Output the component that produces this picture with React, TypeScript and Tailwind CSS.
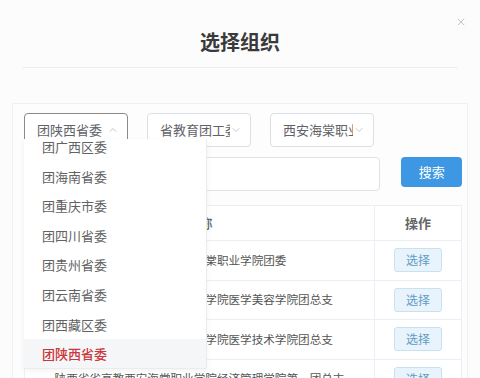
import { ChevronDown, ChevronUp, X } from 'lucide-react';

const provinces = [
  '团广西区委',
  '团海南省委',
  '团重庆市委',
  '团四川省委',
  '团贵州省委',
  '团云南省委',
  '团西藏区委',
  '团陕西省委',
];

const orgs = [
  '陕西省高教西安海棠职业学院团委',
  '陕西省省高教西安海棠职业学院医学美容学院团总支',
  '陕西省省高教西安海棠职业学院医学技术学院团总支',
  '陕西省省高教西安海棠职业学院经济管理学院第一团总支',
];

function Select({ label, open }: { label: string; open?: boolean }) {
  return (
    <div
      className={`flex h-[34px] w-[104px] items-center rounded-[4px] border bg-white pl-[12px] pr-[8px] ${
        open ? 'border-[#8a8a8a]' : 'border-[#dcdfe6]'
      }`}
    >
      <span className="flex-1 overflow-hidden whitespace-nowrap text-[13px] text-[#606266]">{label}</span>
      {open ? (
        <ChevronUp size={12} strokeWidth={1.5} className="text-[#b4b4b4]" />
      ) : (
        <ChevronDown size={12} strokeWidth={1.5} className="text-[#b4b4b4]" />
      )}
    </div>
  );
}

export default function App() {
  return (
    <div
      className="relative h-[378px] w-[480px] overflow-hidden bg-[#fcfcfc]"
      style={{ fontFamily: '"Noto Sans CJK SC", "Noto Sans", sans-serif' }}
    >
      <button className="absolute right-[13px] top-[16px] text-[#aaaaaa]">
        <X size={12} strokeWidth={1.4} />
      </button>
      <h1 className="pt-[28px] text-center text-[20px] font-bold leading-[28px] text-[#3a3a3a]">选择组织</h1>
      <div className="mx-[22px] mt-[11px] border-b border-[#efefef]" />

      <div className="mx-[12px] mt-[35px] border-x border-t border-[#f0f0f0] bg-[#fdfdfd] pb-4 pl-[11px] pr-[5px] pt-[9px]">
        {/* filters */}
        <div className="flex gap-[19px]">
          <div className="relative">
            <Select label="团陕西省委" open />
            <div className="absolute left-0 top-[26px] z-10 h-[230px] w-[183px] overflow-hidden border-b border-r border-[#ebebeb] bg-white shadow-[0_2px_6px_rgba(0,0,0,0.05)]">
              <ul className="mt-[-7px]">
                {provinces.map((p, i) => (
                  <li
                    key={p}
                    className={`flex h-[29.6px] items-center pl-[18px] text-[13px] ${
                      i === provinces.length - 1
                        ? 'bg-[#f5f6f8] font-medium text-[#c8383c]'
                        : 'text-[#626262]'
                    }`}
                  >
                    {p}
                  </li>
                ))}
              </ul>
            </div>
          </div>
          <Select label="省教育团工委" />
          <Select label="西安海棠职业学院" />
        </div>

        {/* search */}
        <div className="mt-[10px] flex items-start">
          <input className="h-[34px] w-[358px] rounded-[4px] border border-[#e2e2e2] bg-white outline-none" />
          <button className="ml-[21px] h-[30px] w-[61px] rounded-[4px] bg-[#3e97e2] text-[13px] text-white">搜索</button>
        </div>

        {/* table */}
        <div className="mt-[14px] border border-[#ebeef5] bg-white">
          <div className="flex h-[35px] border-b border-[#ebeef5]">
            <div className="flex flex-1 items-center justify-center text-[13px] font-medium text-[#666]">名称</div>
            <div className="flex w-[87px] items-center justify-center border-l border-[#ebeef5] text-[13px] font-bold text-[#666]">
              操作
            </div>
          </div>
          {orgs.map((o) => (
            <div key={o} className="flex h-[39.5px] border-b border-[#ebeef5]">
              <div className="flex flex-1 items-center justify-center whitespace-nowrap px-[20px] text-[11.6px] text-[#555]">
                {o}
              </div>
              <div className="flex w-[87px] items-center justify-center border-l border-[#ebeef5]">
                <button className="h-[24px] w-[48px] rounded-[3px] border border-[#c9e2f2] bg-[#e8f3fb] text-[12px] text-[#5d9cc6]">
                  选择
                </button>
              </div>
            </div>
          ))}
        </div>
      </div>
    </div>
  );
}
